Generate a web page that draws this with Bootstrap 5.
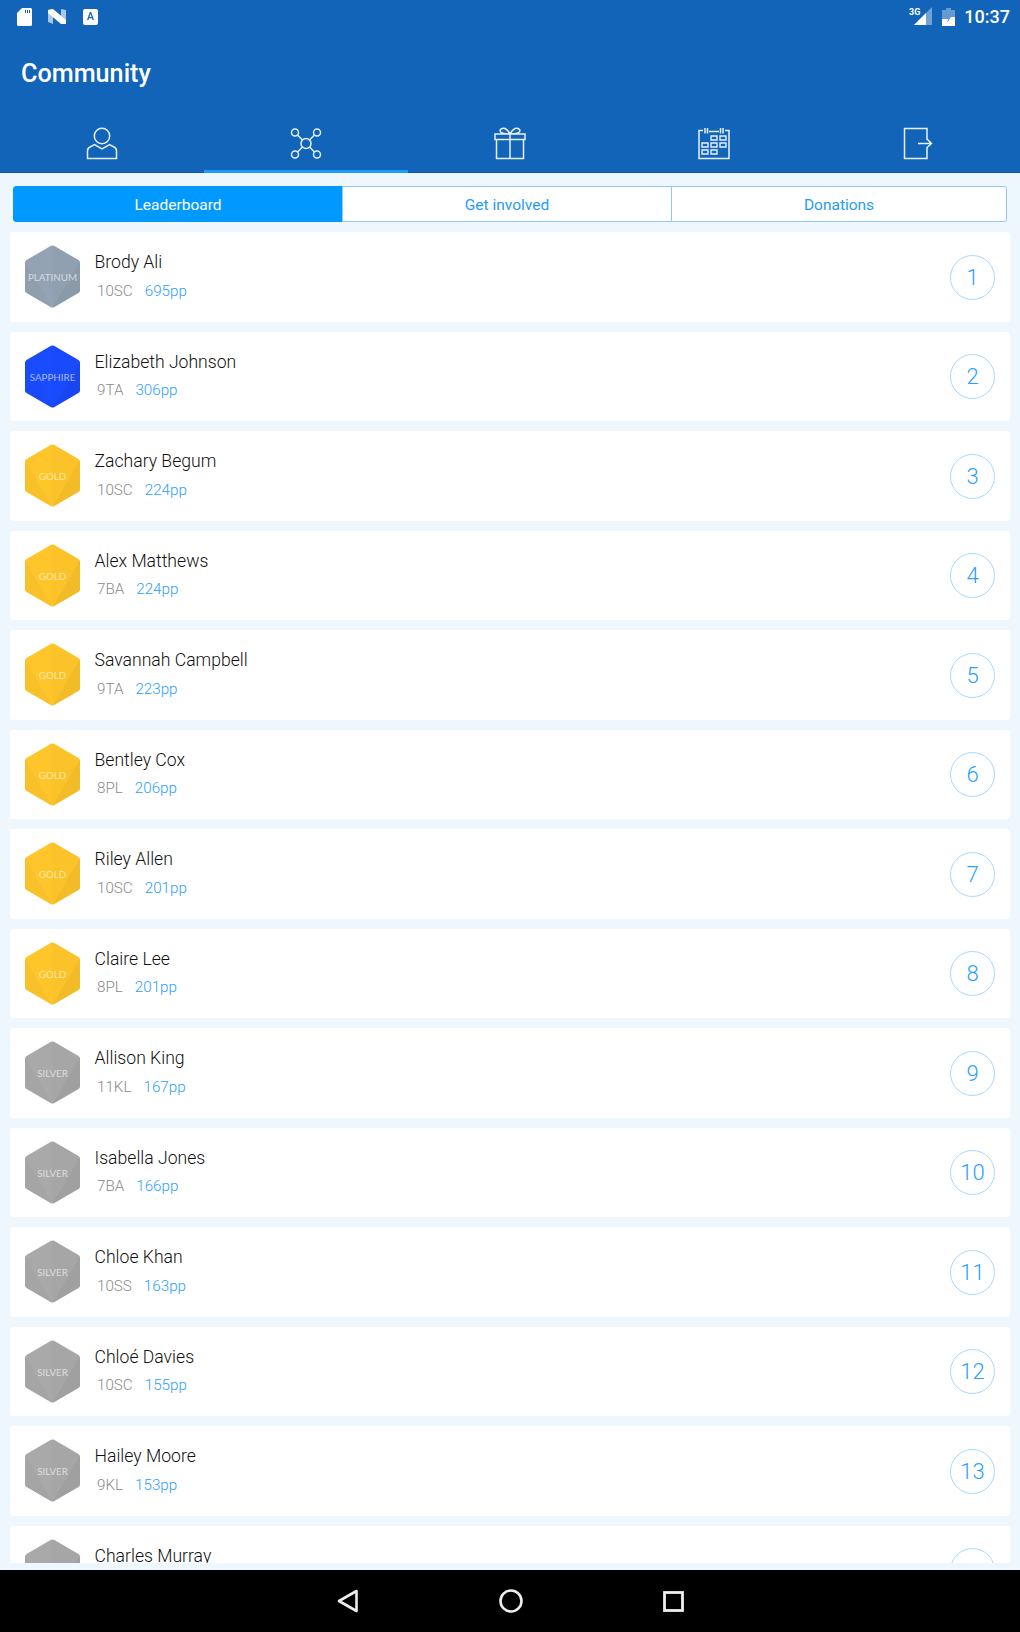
<!DOCTYPE html>
<html lang="en">
<head>
    <meta charset="UTF-8">
    <meta name="viewport" content="width=device-width, initial-scale=1.0">
    <title>Community</title>
    <link href="https://cdn.jsdelivr.net/npm/bootstrap@5.3.0/dist/css/bootstrap.min.css" rel="stylesheet">
    <style>
        body {
            background-color: #eef6fe;
            font-family: Roboto, sans-serif;
            overflow: hidden;
        }
        .app-shell {
            height: 1632px;
        }
        .app-header {
            background-color: #1264b8;
            height: 173px;
            color: #fff;
        }
        .status-bar {
            height: 33px;
            padding: 0 10px 0 17px;
        }
        .status-time {
            font-size: 18px;
            font-weight: 500;
            margin-left: 9px;
        }
        .app-a-icon {
            margin-left: 17px;
        }
        .app-title {
            font-size: 25.200px;
            font-weight: 500;
            line-height: 30px;
            margin: 26px 0 0 21px;
        }
        .tab-strip {
            margin-top: 23px;
            height: 61px;
            border-bottom: 1px solid #0e58a6;
        }
        .tab-item {
            flex: 1 1 0;
            padding-top: 15px;
            text-align: center;
            margin-bottom: -1px;
            border-bottom: 3px solid transparent;
        }
        .tab-item.current {
            border-bottom-color: #1f9bfb;
        }
        .tab-icon {
            fill: none;
            stroke: #e6eff8;
            stroke-width: 1.5;
            display: block;
            margin: 0 auto;
        }
        .seg-wrap {
            padding: 13px 13px 0 13px;
        }
        .btn-group .seg-btn {
            --bs-btn-border-radius: 3px;
            height: 36px;
            padding: 2px 0 0;
            flex: 0 0 330px;
            background-color: #fff;
            color: #1f9bfb;
            border: 1px solid #93c6fb;
            font-size: 15.500px;
            line-height: 32px;
        }
        .btn-group .seg-btn:last-child {
            flex: 1 1 0;
        }
        .btn-group .seg-btn.current {
            background-color: #0099ff;
            border-color: #0099ff;
            color: #fff;
        }
        .board-list {
            flex: 1 1 0;
            min-height: 0;
            margin: 10px 10px 7px 10px;
            overflow: hidden;
        }
        .board-row {
            height: 89.500px;
            margin-bottom: 10px;
            padding: 0 15px;
            border: 0;
            border-radius: 3px;
        }
        .hex-badge {
            width: 55px;
            height: 63px;
            flex: none;
            position: relative;
            margin-right: 14.500px;
        }
        .hex-badge svg {
            display: block;
        }
        .hex-label {
            position: absolute;
            left: 0;
            right: 0;
            top: 24px;
            text-align: center;
            font-family: Lato, sans-serif;
            font-size: 9.800px;
            line-height: 16px;
            color: rgba(255, 255, 255, .62);
        }
        .tier-platinum { fill: #93a3b3; }
        .tier-sapphire { fill: #1a4cff; }
        .tier-gold { fill: #ffc62b; }
        .tier-silver { fill: #a9a9a9; }
        .person-text {
            padding-bottom: 1px;
        }
        .person-name {
            font-size: 17.600px;
            font-weight: 300;
            line-height: 24px;
            color: #111;
        }
        .person-meta {
            font-size: 15.200px;
            font-weight: 300;
            line-height: 24px;
            min-height: 24px;
            margin: 4.500px 0 0 2.500px;
            color: #8a8a8a;
        }
        .person-points {
            color: #2ba0ff;
            margin-left: 12px;
        }
        .rank-ring {
            width: 45px;
            height: 45px;
            flex: none;
            margin: 1px 0 0 auto;
            border: 1.500px solid #a9d8ff;
            font-size: 22px;
            font-weight: 300;
            color: #2ba0ff;
        }
        .android-nav {
            height: 62px;
            background-color: #000;
            gap: 140px;
        }
    </style>
</head>
<body>
    <svg width="0" height="0" class="d-block">
        <symbol id="hex" viewBox="0 0 55 63">
            <path d="M26 .8Q27.500 0 29 .8L53.500 15Q55 16 55 17.500V45.500Q55 47 53.500 48L29 62.200Q27.500 63 26 62.200L1.500 48Q0 47 0 45.500V17.500Q0 16 1.500 15Z"/>
            <path d="M27.500 0 55 16V47L27.500 63Z" fill="#000" opacity=".015"/>
            <path d="M0 16 27.500 63 1.500 48Q0 47 0 45.500Z" fill="#000" opacity=".025"/>
            <path d="M55 16 27.500 63 53.500 48Q55 47 55 45.500Z" fill="#000" opacity=".035"/>
        </symbol>
    </svg>

    <div class="app-shell d-flex flex-column">
        <header class="app-header flex-shrink-0">
            <div class="status-bar d-flex align-items-center">
                <!-- sd card -->
                <svg width="15" height="18" viewBox="0 0 15 18" fill="#fff"><path d="M5 0H13.500Q15 0 15 1.500V16.500Q15 18 13.500 18H1.500Q0 18 0 16.500V5ZM8 2V5H9V2ZM10 2V5H11V2ZM12 2V5H13V2Z" fill-rule="evenodd"/></svg>
                <!-- launcher N -->
                <svg width="18" height="15" viewBox="0 0 18 15" class="ms-3"><path d="M0 1 5 0V15L0 13Z M13 0 18 1V14L13 15Z" fill="#a9c8e8"/><path d="M5 0 18 11V15H13L0 4V1Z" fill="#fff"/></svg>
                <!-- A app -->
                <svg width="15" height="16" viewBox="0 0 15 16" class="app-a-icon"><rect width="15" height="16" rx="2" fill="#fff"/><path d="M4 11 6.800 3H8.200L11 11H9.500L9 9.300H6L5.500 11ZM6.400 8H8.600L7.500 4.800Z" fill="#1264b8"/></svg>
                <div class="ms-auto d-flex align-items-center">
                    <svg width="26" height="19" viewBox="0 0 26 19"><text x="1" y="8" font-family="Roboto, sans-serif" font-size="9" font-weight="700" fill="#fff">3G</text><path d="M24 0V18H6Z" fill="#fff" opacity=".4"/><path d="M18 6V18H6Z" fill="#fff"/></svg>
                    <svg width="13" height="18" viewBox="0 0 13 18" class="ms-2"><path d="M4 0H9V2H13V18H0V2H4Z" fill="#fff" opacity=".35"/><path d="M0 11H6L5 15 9 9H13V18H0Z" fill="#fff"/></svg>
                    <span class="status-time">10:37</span>
                </div>
            </div>
            <div class="app-title">Community</div>
            <nav class="tab-strip d-flex">
                <div class="tab-item">
                    <svg class="tab-icon" width="32" height="33" viewBox="0 0 32 33"><circle cx="16" cy="9" r="7.700"/><path d="M1.500 31.500V24Q1.500 21 4 20L8.500 17.500 16 22 23.500 17.500 28 20Q30.500 21 30.500 24V31.500Z"/></svg>
                </div>
                <div class="tab-item current">
                    <svg class="tab-icon" width="34" height="33" viewBox="0 0 34 33"><circle cx="17" cy="16.500" r="5"/><circle cx="6" cy="5.500" r="3.500"/><circle cx="28" cy="5.500" r="3.500"/><circle cx="6" cy="27.500" r="3.500"/><circle cx="28" cy="27.500" r="3.500"/><path d="M8.500 8 13.500 13M25.500 8 20.500 13M8.500 25 13.500 20M25.500 25 20.500 20"/></svg>
                </div>
                <div class="tab-item">
                    <svg class="tab-icon" width="32" height="33" viewBox="0 0 32 33"><path d="M1 7H31V12.500H1ZM2.500 12.500V31.500H29.500V12.500M16 7V31.500M16 7Q6 7 6 3.500 7 .5 11 1.500 14 3 16 7ZM16 7Q26 7 26 3.500 25 .5 21 1.500 18 3 16 7Z"/></svg>
                </div>
                <div class="tab-item">
                    <svg class="tab-icon" width="32" height="33" viewBox="0 0 32 33"><path d="M5 3.500H1V31.500H31V3.500H27M11 4.500H21M7 1V6.500M9.500 1V6.500M22.500 1V6.500M25 1V6.500"/><path stroke-width="1.400" d="M13 9H19V13H13ZM22 9H28V13H22ZM4 16H10V20H4ZM13 16H19V20H13ZM22 16H28V20H22ZM4 23H10V27H4ZM13 23H19V27H13Z"/></svg>
                </div>
                <div class="tab-item">
                    <svg class="tab-icon" width="32" height="33" viewBox="0 0 32 33"><path d="M25 13V1.500H2.500V31.500H25V20M16 16.500H29.500M24.500 11.500 29.500 16.500 24.500 21"/></svg>
                </div>
            </nav>
        </header>

        <div class="seg-wrap flex-shrink-0">
            <div class="btn-group d-flex" role="group">
                <button type="button" class="btn seg-btn current">Leaderboard</button>
                <button type="button" class="btn seg-btn">Get involved</button>
                <button type="button" class="btn seg-btn">Donations</button>
            </div>
        </div>

        <main class="board-list" id="board"></main>

        <footer class="android-nav flex-shrink-0 d-flex justify-content-center align-items-center">
            <svg width="22" height="24" viewBox="0 0 22 24" fill="none" stroke="#eee" stroke-width="2.600" stroke-linejoin="round"><path d="M19.500 2V22L2 12Z"/></svg>
            <svg width="24" height="24" viewBox="0 0 24 24" fill="none" stroke="#eee" stroke-width="2.600"><circle cx="12" cy="12" r="10.500"/></svg>
            <svg width="21" height="21" viewBox="0 0 21 21" fill="none" stroke="#eee" stroke-width="2.800"><rect x="1.500" y="1.500" width="18" height="18"/></svg>
        </footer>
    </div>

    <script src="https://cdn.jsdelivr.net/npm/bootstrap@5.3.0/dist/js/bootstrap.bundle.min.js"></script>
    <script>
        const people = [
            ['Brody Ali', '10SC', 695, 'PLATINUM'],
            ['Elizabeth Johnson', '9TA', 306, 'SAPPHIRE'],
            ['Zachary Begum', '10SC', 224, 'GOLD'],
            ['Alex Matthews', '7BA', 224, 'GOLD'],
            ['Savannah Campbell', '9TA', 223, 'GOLD'],
            ['Bentley Cox', '8PL', 206, 'GOLD'],
            ['Riley Allen', '10SC', 201, 'GOLD'],
            ['Claire Lee', '8PL', 201, 'GOLD'],
            ['Allison King', '11KL', 167, 'SILVER'],
            ['Isabella Jones', '7BA', 166, 'SILVER'],
            ['Chloe Khan', '10SS', 163, 'SILVER'],
            ['Chloé Davies', '10SC', 155, 'SILVER'],
            ['Hailey Moore', '9KL', 153, 'SILVER'],
            ['Charles Murray', '', null, 'SILVER']
        ];

        // the last row is cut off by the nav bar, only its name shows
        document.getElementById('board').innerHTML = people.map((p, i) => `
            <div class="card board-row flex-row align-items-center">
                <div class="hex-badge">
                    <svg width="55" height="63" class="tier-${p[3].toLowerCase()}"><use href="#hex"/></svg>
                    ${p[2] ? `<span class="hex-label">${p[3]}</span>` : ''}
                </div>
                <div class="person-text">
                    <div class="person-name">${p[0]}</div>
                    <div class="person-meta">${p[2] ? `${p[1]}<span class="person-points">${p[2]}pp</span>` : ''}</div>
                </div>
                <div class="rank-ring rounded-circle d-flex align-items-center justify-content-center">${p[2] ? i + 1 : ''}</div>
            </div>`).join('');
    </script>
</body>
</html>
